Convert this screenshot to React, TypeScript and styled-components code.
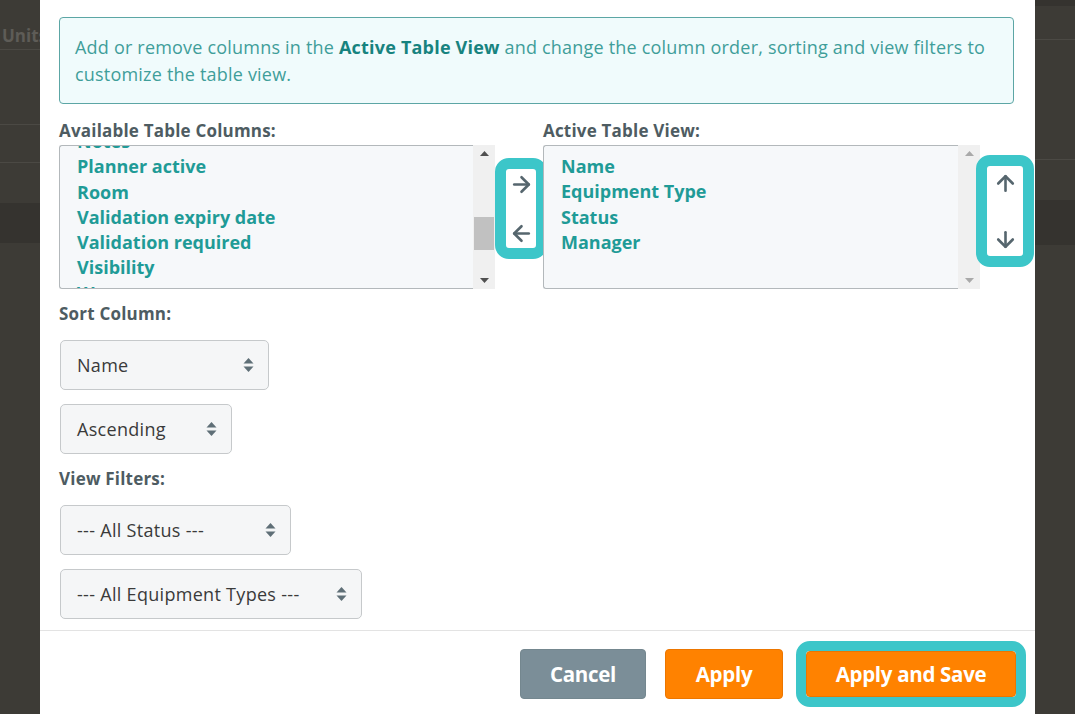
import React from 'react';
import styled, { createGlobalStyle } from 'styled-components';
import { ArrowDown, ArrowLeft, ArrowRight, ArrowUp } from 'lucide-react';

const GlobalStyle = createGlobalStyle`
  html, body {
    margin: 0;
    padding: 0;
    background: #3d3b36;
  }
  body {
    font-family: "Open Sans", "Noto Sans", sans-serif;
  }
  * {
    box-sizing: border-box;
  }
`;

const Screen = styled.div`
  width: 1075px;
  height: 714px;
  overflow: hidden;
  display: grid;
  grid-template-columns: 40px 995px 40px;
  background: #3d3b36;
`;

const Gutter = styled.div`
  display: flex;
  flex-direction: column;
  overflow: hidden;
`;

const GutterRow = styled.div<{ $h: number; $line?: boolean; $dark?: boolean }>`
  flex: 0 0 ${({ $h }) => $h}px;
  display: flex;
  align-items: flex-end;
  padding-bottom: 1px;
  white-space: nowrap;
  border-bottom: ${({ $line }) => ($line ? '1px solid #4b4944' : 'none')};
  background: ${({ $dark }) => ($dark ? '#35332f' : 'transparent')};
`;

const GhostHeading = styled.span`
  font: 700 17px/24px "Open Sans", sans-serif;
  color: #5e5c57;
  padding-left: 2px;
`;

const Modal = styled.div`
  background: #fff;
  display: flex;
  flex-direction: column;
`;

const ModalBody = styled.div`
  padding: 17px 21px 11px 19px;
`;

const InfoBox = styled.div`
  border: 1px solid #5ca6a5;
  border-radius: 4px;
  background: #f0fbfc;
  padding: 16px 15px 15px;
  font-size: 18px;
  line-height: 27px;
  letter-spacing: 0.2px;
  color: #3f9e9a;

  strong {
    color: #17837f;
    font-weight: 700;
  }
`;

const Columns = styled.div`
  display: flex;
  margin: 16px -21px 0 0;
`;

const ColumnGroup = styled.div<{ $w: number }>`
  flex: 0 0 ${({ $w }) => $w}px;
  display: flex;
  flex-direction: column;
`;

const ColumnLabel = styled.div`
  font-size: 17px;
  font-weight: 700;
  line-height: 22px;
  letter-spacing: 0.2px;
  color: #4e5c62;
  margin-bottom: 3px;
`;

const ListRow = styled.div<{ $side: number }>`
  display: grid;
  grid-template-columns: 1fr ${({ $side }) => $side}px;
  align-items: start;
`;

const ListBox = styled.div`
  height: 144px;
  display: flex;
`;

const ListArea = styled.div`
  flex: 1;
  border: 1px solid #b3b8bb;
  border-right: none;
  border-radius: 3px 0 0 3px;
  background: #f6f8fa;
  overflow: hidden;
  padding: 8px 17px 0;
`;

const ItemList = styled.ul<{ $offset: number }>`
  list-style: none;
  margin: ${({ $offset }) => -$offset}px 0 0;
  padding: 0;
`;

const Item = styled.li`
  font-size: 18px;
  font-weight: 700;
  line-height: 25.3px;
  color: #1f9b97;
  white-space: nowrap;
`;

const Scrollbar = styled.div`
  flex: 0 0 22px;
  display: flex;
  flex-direction: column;
  background: #f0f0f0;
`;

const ScrollButton = styled.div`
  flex: 0 0 17px;
  display: flex;
  align-items: center;
  justify-content: center;
`;

const Track = styled.div`
  flex: 1;
  display: flex;
  flex-direction: column;
  padding: 0 1px;
`;

const Thumb = styled.div`
  height: 33px;
  background: #c1c1c1;
`;

const Ring = styled.div<{ $top: number; $shift: number; $inner: number; $h: number; $pad: number }>`
  margin-top: ${({ $top }) => $top}px;
  margin-left: ${({ $shift }) => $shift}px;
  width: ${({ $inner }) => $inner + 22}px;
  height: ${({ $h }) => $h}px;
  border: 11px solid #3cc6c9;
  border-radius: 14px;
  background: #fff;
  display: flex;
  flex-direction: column;
  justify-content: space-between;
  align-items: center;
  padding: ${({ $pad }) => $pad}px 0;
  color: #56666e;
`;

const MoveButton = styled.button`
  border: none;
  background: transparent;
  padding: 0;
  width: 26px;
  height: 26px;
  display: flex;
  align-items: center;
  justify-content: center;
  color: inherit;
`;

const FieldLabel = styled.div`
  font-size: 17px;
  font-weight: 700;
  line-height: 22px;
  letter-spacing: 0.2px;
  color: #4e5c62;
  margin: 14px 0 15px;
`;

const SelectBox = styled.div<{ $w: number }>`
  width: ${({ $w }) => $w}px;
  height: 50px;
  margin-left: 1px;
  margin-bottom: 14px;
  border: 1px solid #c6c9cb;
  border-radius: 5px;
  background: #f5f6f7;
  display: flex;
  align-items: center;
  justify-content: space-between;
  padding: 0 14px 0 16px;
  font-size: 18px;
  letter-spacing: 0.3px;
  color: #3a3a3a;

  &:last-child {
    margin-bottom: 0;
  }
`;

const Footer = styled.div`
  border-top: 1px solid #e3e3e3;
  padding: 18px 19px;
  display: flex;
  justify-content: flex-end;
  align-items: center;
`;

const ActionButton = styled.button<{ $variant: 'muted' | 'primary'; $w: number; $h?: number }>`
  width: ${({ $w }) => $w}px;
  height: ${({ $h }) => $h ?? 50}px;
  border-radius: 4px;
  border: 1px solid ${({ $variant }) => ($variant === 'muted' ? '#74878f' : '#ec7600')};
  background: ${({ $variant }) => ($variant === 'muted' ? '#7b8e98' : '#ff8200')};
  color: #fff;
  font-family: "Open Sans", sans-serif;
  font-size: 20.5px;
  font-weight: 700;
  letter-spacing: -0.3px;
  display: flex;
  align-items: center;
  justify-content: center;
  margin-left: 19px;
`;

const SaveRing = styled.div`
  border: 10px solid #3cc6c9;
  border-radius: 14px;
  margin: -10px -10px -10px 13px;
  display: flex;

  ${ActionButton} {
    margin-left: 0;
  }
`;

const Triangle = ({ up, color }: { up?: boolean; color: string }) => (
  <svg width="9" height="5" viewBox="0 0 9 5">
    <polygon points={up ? '0,5 4.5,0 9,5' : '0,0 4.5,5 9,0'} fill={color} />
  </svg>
);

const Caret = () => (
  <svg width="11" height="16" viewBox="0 0 11 16">
    <polygon points="0.5,6.5 5.5,1 10.5,6.5" fill="#5f6f77" />
    <polygon points="0.5,9.5 5.5,15 10.5,9.5" fill="#5f6f77" />
  </svg>
);

const available = [
  'Notes',
  'Planner active',
  'Room',
  'Validation expiry date',
  'Validation required',
  'Visibility',
  'Warranty',
];
const active = ['Name', 'Equipment Type', 'Status', 'Manager'];

const List = ({
  items,
  offset,
  thumbTop,
}: {
  items: string[];
  offset: number;
  thumbTop?: number;
}) => {
  const arrow = thumbTop === undefined ? '#a9a9a9' : '#505050';
  return (
    <ListBox>
      <ListArea>
        <ItemList $offset={offset}>
          {items.map((it) => (
            <Item key={it}>{it}</Item>
          ))}
        </ItemList>
      </ListArea>
      <Scrollbar>
        <ScrollButton>
          <Triangle up color={arrow} />
        </ScrollButton>
        <Track>
          {thumbTop !== undefined && <Thumb style={{ marginTop: thumbTop }} />}
        </Track>
        <ScrollButton>
          <Triangle color={arrow} />
        </ScrollButton>
      </Scrollbar>
    </ListBox>
  );
};

export default function App() {
  return (
    <>
      <GlobalStyle />
      <Screen>
        <Gutter>
          <GutterRow $h={50} $line>
            <GhostHeading>Units</GhostHeading>
          </GutterRow>
          <GutterRow $h={75} $line />
          <GutterRow $h={38} $line />
          <GutterRow $h={40} />
          <GutterRow $h={40} $dark />
        </Gutter>

        <Modal>
          <ModalBody>
            <InfoBox>
              Add or remove columns in the <strong>Active Table View</strong> and change the
              column order, sorting and view filters to customize the table view.
            </InfoBox>

            <Columns>
              <ColumnGroup $w={484}>
                <ColumnLabel>Available Table Columns:</ColumnLabel>
                <ListRow $side={48}>
                  <List items={available} offset={25} thumbTop={55} />
                  <Ring $top={13} $shift={0} $inner={30} $h={101} $pad={2}>
                    <MoveButton>
                      <ArrowRight size={25} strokeWidth={2.5} />
                    </MoveButton>
                    <MoveButton>
                      <ArrowLeft size={25} strokeWidth={2.5} />
                    </MoveButton>
                  </Ring>
                </ListRow>
              </ColumnGroup>
              <ColumnGroup $w={492}>
                <ColumnLabel>Active Table View:</ColumnLabel>
                <ListRow $side={55}>
                  <List items={active} offset={0} />
                  <Ring $top={10} $shift={-4} $inner={36} $h={112} $pad={4}>
                    <MoveButton>
                      <ArrowUp size={25} strokeWidth={2.5} />
                    </MoveButton>
                    <MoveButton>
                      <ArrowDown size={25} strokeWidth={2.5} />
                    </MoveButton>
                  </Ring>
                </ListRow>
              </ColumnGroup>
            </Columns>

            <FieldLabel>Sort Column:</FieldLabel>
            <SelectBox $w={209}>
              Name <Caret />
            </SelectBox>
            <SelectBox $w={172}>
              Ascending <Caret />
            </SelectBox>

            <FieldLabel>View Filters:</FieldLabel>
            <SelectBox $w={231}>
              --- All Status --- <Caret />
            </SelectBox>
            <SelectBox $w={302}>
              --- All Equipment Types --- <Caret />
            </SelectBox>
          </ModalBody>

          <Footer>
            <ActionButton $variant="muted" $w={126}>
              Cancel
            </ActionButton>
            <ActionButton $variant="primary" $w={118}>
              Apply
            </ActionButton>
            <SaveRing>
              <ActionButton $variant="primary" $w={210} $h={46}>
                Apply and Save
              </ActionButton>
            </SaveRing>
          </Footer>
        </Modal>

        <Gutter>
          <GutterRow $h={6} $dark />
          <GutterRow $h={34} $line />
          <GutterRow $h={120} $line />
          <GutterRow $h={40} />
          <GutterRow $h={45} $dark />
        </Gutter>
      </Screen>
    </>
  );
}
